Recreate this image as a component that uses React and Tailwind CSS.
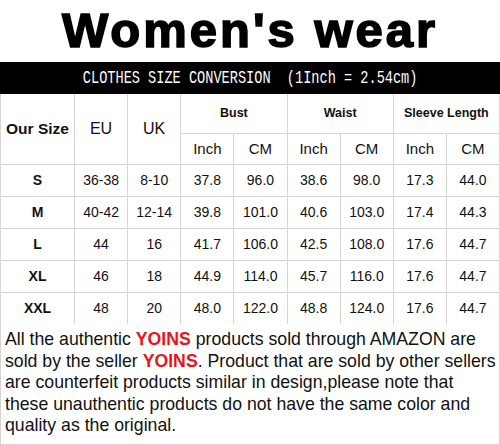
import React from 'react';

// Size chart rows: [size, EU, UK, bust in, bust cm, waist in, waist cm, sleeve in, sleeve cm]
const rows = [
    ['S', '36-38', '8-10', '37.8', '96.0', '38.6', '98.0', '17.3', '44.0'],
    ['M', '40-42', '12-14', '39.8', '101.0', '40.6', '103.0', '17.4', '44.3'],
    ['L', '44', '16', '41.7', '106.0', '42.5', '108.0', '17.6', '44.7'],
    ['XL', '46', '18', '44.9', '114.0', '45.7', '116.0', '17.6', '44.7'],
    ['XXL', '48', '20', '48.0', '122.0', '48.8', '124.0', '17.6', '44.7'],
];

const cell = 'bg-white flex items-center justify-center text-[#111]';

const App = () => {
    return (
        <div className="w-[500px] h-[445px] bg-white overflow-hidden font-['Liberation_Sans',Arial,sans-serif]">
            {/* Title */}
            <div className="h-[62px] pt-[6px] text-center">
                <h1 className="text-[49px] leading-none font-bold tracking-[3px] text-black [-webkit-text-stroke:1.6px_black]">
                    Women's wear
                </h1>
            </div>

            {/* Black banner */}
            <div className="h-[32px] bg-black flex items-center justify-center pt-[2px]">
                <span className="text-white text-[17px] font-['Liberation_Mono',monospace] whitespace-pre scale-x-[0.8] scale-y-[1.1]">
                    CLOTHES SIZE CONVERSION  (1Inch = 2.54cm)
                </span>
            </div>

            {/* Table */}
            <div className="grid grid-cols-[73px_repeat(8,minmax(0,1fr))] grid-rows-[39px_30px_repeat(5,31px)] gap-px bg-[#d4d4d4] px-px">
                <div className={`${cell} row-span-2 text-[15.5px] font-bold`}>Our Size</div>
                <div className={`${cell} row-span-2 text-[16px]`}>EU</div>
                <div className={`${cell} row-span-2 text-[16px]`}>UK</div>
                <div className={`${cell} col-span-2 text-[12.5px] font-bold`}>Bust</div>
                <div className={`${cell} col-span-2 text-[12.5px] font-bold`}>Waist</div>
                <div className={`${cell} col-span-2 text-[12.5px] font-bold`}>Sleeve Length</div>
                {['Inch', 'CM', 'Inch', 'CM', 'Inch', 'CM'].map((h, i) => (
                    <div key={i} className={`${cell} text-[15px]`}>{h}</div>
                ))}
                {rows.map((r) =>
                    r.map((v, i) => (
                        <div key={r[0] + i} className={`${cell} ${i === 0 ? 'text-[14px] font-bold' : 'text-[14px]'}`}>
                            {v}
                        </div>
                    ))
                )}
            </div>

            {/* Notice */}
            <div className="h-[121px] border-x border-b border-[#d4d4d4] pl-[4px] pt-[5px] text-[17.7px] leading-[21.5px] text-[#111] whitespace-nowrap">
                All the authentic <span className="font-bold text-[#e8141c]">YOINS</span> products sold through AMAZON are<br />
                sold by the seller <span className="font-bold text-[#e8141c]">YOINS</span>. Product that are sold by other sellers<br />
                are counterfeit products similar in design,please note that<br />
                these unauthentic products do not have the same color and<br />
                quality as the original.
            </div>
        </div>
    );
};

export default App;
